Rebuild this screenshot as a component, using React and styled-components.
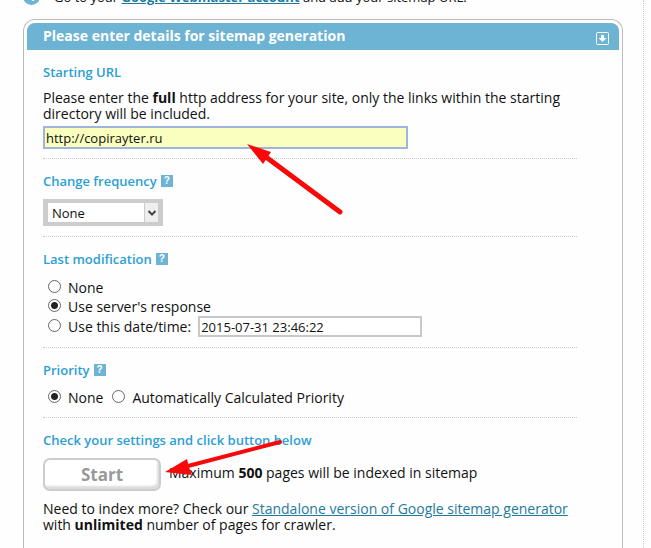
import React, { useState } from 'react';
import styled, { createGlobalStyle } from 'styled-components';

const GlobalStyle = createGlobalStyle`
*, *::before, *::after {
  box-sizing: border-box;
}
body {
  margin: 0;
  background-color: #fefefe;
  color: #111;
  font-family: 'Trebuchet MS', 'Open Sans', 'Noto Sans', sans-serif;
  font-size: 14px;
  line-height: 16px;
}
`;
const Main = styled.main`
position: relative;
display: flex;
flex-direction: column;
min-height: 100vh;
margin-right: 7px;
padding: 0 20px 0 23px;
border-right: 1px dotted #ccc;
`;
const Step = styled.div`
display: flex;
flex: none;
align-items: flex-end;
height: 19px;
padding-bottom: 14px;
font-size: 13px;
`;
const StepNumber = styled.span`
flex: none;
width: 17px;
height: 17px;
margin-right: 14px;
border-radius: 50%;
background-color: #6db3d3;
color: #fff;
font-weight: bold;
text-align: center;
`;
const Link = styled.a`
color: #1f7a9c;
text-decoration: underline;
font-weight: ${({ $bold }) => $bold ? 'bold' : 'normal'};
`;
const Panel = styled.section`
flex: 1;
padding: 3px 3px 0;
border: 1px solid #bbb;
border-bottom: 0;
border-radius: 12px 12px 0 0;
`;
const PanelHeader = styled.header`
display: flex;
align-items: flex-start;
justify-content: space-between;
height: 27px;
padding: 3px 10px 5px 16px;
border-radius: 8px 8px 0 0;
background-color: #6db3d3;
`;
const PanelTitle = styled.h2`
margin: 0;
color: #fff;
font-size: 14px;
line-height: 20px;
`;
const CollapseButton = styled.button`
display: flex;
align-self: flex-end;
padding: 0;
border: 0;
background: none;
cursor: pointer;
`;
const Form = styled.form`
padding: 0 42px 0 16px;
`;
const Group = styled.section`
padding: 13px 0 ${({ $bottom }) => $bottom || 10}px;
border-bottom: ${({ $last }) => $last ? '0' : '1px dotted #ccc'};
`;
const GroupTitle = styled.h3`
display: flex;
align-items: center;
gap: 4px;
margin: 0 0 9px;
color: #2b9fd6;
font-size: 13px;
font-weight: 600;
line-height: 18px;
`;
const HelpButton = styled.button`
width: 12px;
height: 12px;
padding: 0;
border: 0;
background-color: #6db3d3;
color: #fff;
font: bold 10px/12px 'Liberation Sans', sans-serif;
`;
const Text = styled.p`
margin: 0 0 ${({ $bottom }) => $bottom || 0}px;
`;
const UrlInput = styled.input`
display: block;
width: 365px;
max-width: 100%;
height: 23px;
padding: 0 1px;
border: 2px solid #9fb4e0;
outline: 0;
background-color: #faffbd;
color: #111;
font: inherit;
font-size: 13px;
`;
const SelectFrame = styled.div`
position: relative;
width: 120px;
padding: 4px 5px;
background-color: #ccc;
`;
const Select = styled.select`
display: block;
width: 100%;
height: 19px;
padding: 0 4px;
border: 0;
border-radius: 0;
appearance: none;
background-color: #fff;
color: #111;
font: inherit;
font-size: 13px;
`;
const SelectArrow = styled.svg`
position: absolute;
top: 4px;
right: 5px;
pointer-events: none;
`;
const Options = styled.div`
display: flex;
flex-direction: ${({ $inline }) => $inline ? 'row' : 'column'};
column-gap: 9px;
padding-top: ${({ $inline }) => $inline ? 0 : 1}px;
`;
const Option = styled.div`
display: flex;
align-items: center;
gap: 7px;
min-height: 19px;
padding-left: ${({ $flush }) => $flush ? 0 : 5}px;
`;
const Radio = styled.input`
flex: none;
width: 13px;
height: 13px;
margin: 0 0 3px;
border: 1px solid #666;
border-radius: 50%;
appearance: none;
background-color: #fff;
&:checked {
  background-image: radial-gradient(circle, #222 3px, transparent 4px);
}
`;
const DateInput = styled.input`
width: 224px;
height: 21px;
padding: 0 1px;
border: 2px solid #c8c8c8;
background-color: #fff;
color: #111;
font: inherit;
font-size: 13px;
`;
const StartRow = styled.div`
display: flex;
align-items: center;
gap: 8px;
margin-bottom: 10px;
`;
const StartNote = styled.span`
padding-bottom: 4px;
`;
const StartButton = styled.button`
width: 118px;
height: 33px;
padding: 0;
border: 2px solid #ccc;
border-radius: 7px;
background-color: #fff;
box-shadow: inset -2px -3px 2px #ddd;
color: #999;
font: bold 17px/24px 'Trebuchet MS', 'Open Sans', 'Noto Sans', sans-serif;
`;
const Arrows = styled.svg`
position: absolute;
top: 0;
left: 0;
pointer-events: none;
`;

const Title = ({ children, help }) => (
  <GroupTitle>
    {children}
    {help && <HelpButton type='button' aria-label={help}>?</HelpButton>}
  </GroupTitle>
);

const App = () => {
  const [url, setUrl] = useState('http://copirayter.ru');
  const [modified, setModified] = useState('server');
  const [date, setDate] = useState('2015-07-31 23:46:22');
  const [priority, setPriority] = useState('none');

  return <>
    <GlobalStyle />
    <Main>
      <Step>
        <StepNumber>4</StepNumber>
        <span>Go to your <Link href='#webmaster' $bold>Google Webmaster account</Link> and add your sitemap URL.</span>
      </Step>
      <Panel>
        <PanelHeader>
          <PanelTitle>Please enter details for sitemap generation</PanelTitle>
          <CollapseButton type='button' aria-label='Collapse'>
            <svg width='13' height='13' viewBox='0 0 13 13'>
              <rect x='.5' y='.5' width='12' height='12' rx='1' fill='none' stroke='#fff' />
              <path d='M5 3h3v3h2.500L6.500 10 2.500 6H5z' fill='#fff' />
            </svg>
          </CollapseButton>
        </PanelHeader>
        <Form onSubmit={e => e.preventDefault()}>
          <Group $bottom={9}>
            <Title>Starting URL</Title>
            <Text $bottom={4}>
              Please enter the <b>full</b> http address for your site, only the links within the starting directory will be included.
            </Text>
            <UrlInput aria-label='Starting URL' value={url} onChange={e => setUrl(e.target.value)} />
          </Group>
          <Group>
            <Title help='About change frequency'>Change frequency</Title>
            <SelectFrame>
              <Select aria-label='Change frequency'>
                <option>None</option>
                <option>Daily</option>
                <option>Weekly</option>
              </Select>
              <SelectArrow width='14' height='19' viewBox='0 0 14 19'>
                <path d='M0 0h14v19H0z' fill='#eee' />
                <path d='M.5 0v19' stroke='#ccc' />
                <path d='M4.500 8l3.500 3.500L11.500 8' fill='none' stroke='#444' strokeWidth='2' />
              </SelectArrow>
            </SelectFrame>
          </Group>
          <Group>
            <Title help='About last modification'>Last modification</Title>
            <Options>
              <Option>
                <Radio type='radio' id='mod-none' name='mod' checked={modified === 'none'} onChange={() => setModified('none')} />
                <label htmlFor='mod-none'>None</label>
              </Option>
              <Option>
                <Radio type='radio' id='mod-server' name='mod' checked={modified === 'server'} onChange={() => setModified('server')} />
                <label htmlFor='mod-server'>Use server's response</label>
              </Option>
              <Option>
                <Radio type='radio' id='mod-date' name='mod' checked={modified === 'date'} onChange={() => setModified('date')} />
                <label htmlFor='mod-date'>Use this date/time:</label>
                <DateInput aria-label='Date and time' value={date} onChange={e => setDate(e.target.value)} />
              </Option>
            </Options>
          </Group>
          <Group>
            <Title help='About priority'>Priority</Title>
            <Options $inline>
              <Option>
                <Radio type='radio' id='pr-none' name='pr' checked={priority === 'none'} onChange={() => setPriority('none')} />
                <label htmlFor='pr-none'>None</label>
              </Option>
              <Option $flush>
                <Radio type='radio' id='pr-auto' name='pr' checked={priority === 'auto'} onChange={() => setPriority('auto')} />
                <label htmlFor='pr-auto'>Automatically Calculated Priority</label>
              </Option>
            </Options>
          </Group>
          <Group $last>
            <Title>Check your settings and click button below</Title>
            <StartRow>
              <StartButton type='submit'>Start</StartButton>
              <StartNote>Maximum <b>500</b> pages will be indexed in sitemap</StartNote>
            </StartRow>
            <Text>
              Need to index more? Check our <Link href='#standalone'>Standalone version of Google sitemap generator</Link> with <b>unlimited</b> number of pages for crawler.
            </Text>
          </Group>
        </Form>
      </Panel>
      <Arrows width='350' height='500' viewBox='0 0 350 500' fill='#f80808' stroke='#f80808'>
        <path d='M266 157L340 212' strokeWidth='5' strokeLinecap='round' />
        <path d='M247 144L271 152 267 158 263 164z' stroke='none' />
        <path d='M188 466L280 442' strokeWidth='4' strokeLinecap='round' />
        <path d='M165 472L187 459 189 467 192 475z' stroke='none' />
      </Arrows>
    </Main>
  </>;
};

export default App;
